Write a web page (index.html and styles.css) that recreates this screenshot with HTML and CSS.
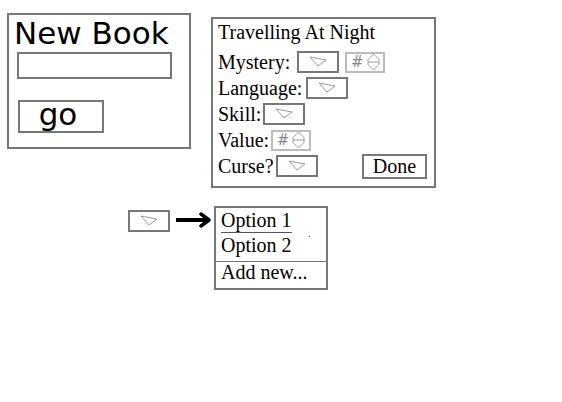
FILE: index.html
```html
<!DOCTYPE html>
<html lang="en">
<head>
    <meta charset="UTF-8">
    <meta name="viewport" content="width=device-width, initial-scale=1.0">
    <title>Book Sketch</title>
    <link rel="stylesheet" href="styles.css">
</head>
<body>
    <div class="top-row">
        <div class="new-book">
            <div class="new-book-title">New Book</div>
            <div class="text-box"></div>
            <div class="go-button">go</div>
        </div>
        <div class="book-panel">
            <div class="book-title">Travelling At Night</div>
            <div class="field-list">
                <div class="field">
                    <span class="label">Mystery:</span>
                    <span class="select gap-wide">
                        <svg width="18" height="12" viewBox="0 0 18 12"><polygon points="1,1 17,4 9,10" fill="none" stroke="#999" stroke-width="1"/></svg>
                    </span>
                    <span class="number gap-num">
                        <span class="hash">#</span>
                        <svg width="13" height="18" viewBox="0 0 13 18"><polygon points="6.5,1 12,6.5 12,11.5 6.5,17 1,11.5 1,6.5" fill="none" stroke="#999" stroke-width="1"/><line x1="1" y1="9" x2="12" y2="9" stroke="#999" stroke-width="1"/></svg>
                    </span>
                </div>
                <div class="field">
                    <span class="label">Language:</span>
                    <span class="select gap-mid">
                        <svg width="18" height="12" viewBox="0 0 18 12"><polygon points="1,1 17,4 9,10" fill="none" stroke="#999" stroke-width="1"/></svg>
                    </span>
                </div>
                <div class="field">
                    <span class="label">Skill:</span>
                    <span class="select">
                        <svg width="18" height="12" viewBox="0 0 18 12"><polygon points="1,1 17,4 9,10" fill="none" stroke="#999" stroke-width="1"/></svg>
                    </span>
                </div>
                <div class="field">
                    <span class="label">Value:</span>
                    <span class="number">
                        <span class="hash">#</span>
                        <svg width="13" height="18" viewBox="0 0 13 18"><polygon points="6.5,1 12,6.5 12,11.5 6.5,17 1,11.5 1,6.5" fill="none" stroke="#999" stroke-width="1"/><line x1="1" y1="9" x2="12" y2="9" stroke="#999" stroke-width="1"/></svg>
                    </span>
                </div>
                <div class="field">
                    <span class="label">Curse?</span>
                    <span class="select">
                        <svg width="18" height="12" viewBox="0 0 18 12"><polygon points="1,1 17,4 9,10" fill="none" stroke="#999" stroke-width="1"/></svg>
                    </span>
                    <span class="done-button">Done</span>
                </div>
            </div>
        </div>
    </div>
    <div class="bottom-row">
        <span class="select demo-select">
            <svg width="18" height="12" viewBox="0 0 18 12"><polygon points="1,1 17,4 9,10" fill="none" stroke="#999" stroke-width="1"/></svg>
        </span>
        <svg class="arrow" width="36" height="16" viewBox="0 0 36 16">
            <path d="M1 8 L32 8" stroke="#000" stroke-width="4" stroke-linecap="round"/>
            <path d="M25 2 L33 8 L25 14" fill="none" stroke="#000" stroke-width="3.5" stroke-linecap="round" stroke-linejoin="round"/>
        </svg>
        <div class="dropdown">
            <div class="option first">Option 1</div>
            <div class="option">Option 2</div>
            <div class="option add">Add new...</div>
            <span class="speck"></span>
        </div>
    </div>
</body>
</html>
```
FILE: styles.css
```css
body {
    margin: 0;
    background: white;
    color: black;
    font-family: "Liberation Serif", serif;
}
.top-row {
    display: flex;
    align-items: flex-start;
}
.new-book {
    box-sizing: border-box;
    width: 184px;
    height: 136px;
    margin: 13px 0 0 7px;
    padding: 3px 0 0 8px;
    border: 2px solid #777;
}
.new-book-title {
    font-family: "DejaVu Sans", sans-serif;
    font-size: 31px;
    line-height: 31px;
    margin-left: -3px;
    white-space: nowrap;
}
.text-box {
    box-sizing: border-box;
    width: 155px;
    height: 27px;
    margin-top: 3px;
    border: 2px solid #777;
}
.go-button {
    box-sizing: border-box;
    width: 86px;
    height: 33px;
    margin: 21px 0 0 1px;
    padding-right: 6px;
    border: 2px solid #777;
    font-family: "DejaVu Sans", sans-serif;
    font-size: 31px;
    line-height: 24px;
    text-align: center;
}
.book-panel {
    box-sizing: border-box;
    width: 225px;
    height: 171px;
    margin: 17px 0 0 20px;
    padding: 2px 7px 0 5px;
    border: 2px solid #777;
}
.book-title {
    font-size: 20px;
    line-height: 22px;
    white-space: nowrap;
}
.field-list {
    display: flex;
    flex-direction: column;
    gap: 4px;
    margin-top: 8px;
}
.field {
    display: flex;
    align-items: center;
    height: 22px;
}
.label {
    font-size: 20px;
    line-height: 22px;
    white-space: nowrap;
}
.select {
    box-sizing: border-box;
    display: flex;
    align-items: center;
    justify-content: center;
    width: 42px;
    height: 22px;
    margin-left: 2px;
    border: 2px solid #777;
}
.gap-wide {
    margin-left: 7px;
}
.gap-mid {
    margin-left: 4px;
}
.number {
    box-sizing: border-box;
    display: flex;
    align-items: center;
    justify-content: center;
    gap: 3px;
    width: 40px;
    height: 21px;
    margin-left: 2px;
    border: 2px solid #bbb;
}
.gap-num {
    margin-left: 6px;
}
.hash {
    font-family: "DejaVu Sans", sans-serif;
    font-size: 15px;
    font-style: italic;
    color: #888;
}
.done-button {
    box-sizing: border-box;
    width: 65px;
    height: 25px;
    margin-left: auto;
    border: 2px solid #777;
    font-size: 20px;
    line-height: 21px;
    text-align: center;
}
.bottom-row {
    display: flex;
    align-items: flex-start;
    margin-top: 18px;
}
.demo-select {
    margin: 4px 0 0 128px;
}
.arrow {
    margin: 6px 0 0 6px;
}
.dropdown {
    position: relative;
    box-sizing: border-box;
    width: 114px;
    height: 84px;
    margin-left: 2px;
    border: 2px solid #777;
    padding: 0 4px 0 5px;
}
.option {
    font-size: 20px;
    line-height: 24px;
    white-space: nowrap;
}
.option.first {
    width: fit-content;
    border-bottom: 1px solid #555;
}
.option.add {
    line-height: 20px;
    margin: 4px -4px 0 -5px;
    padding-left: 5px;
    border-top: 1px solid #777;
}
.speck {
    position: absolute;
    left: 93px;
    top: 28px;
    width: 1px;
    height: 1px;
    background: #555;
}
```
